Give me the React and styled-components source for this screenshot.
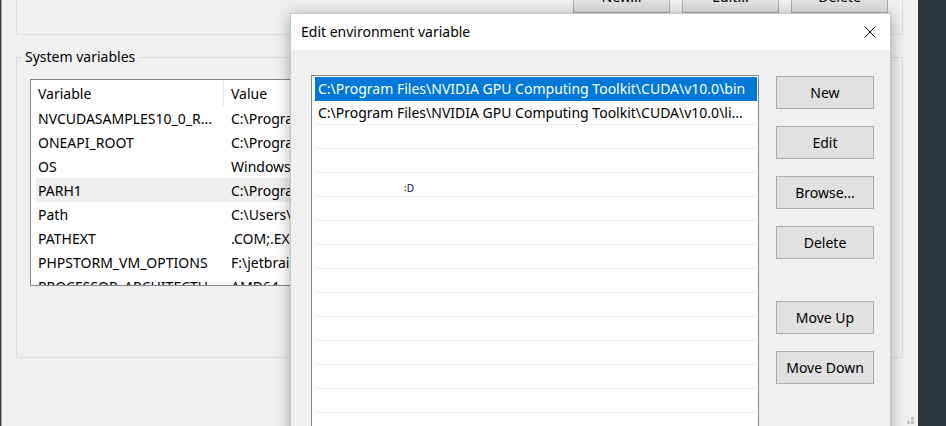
import React from "react";
import styled, { createGlobalStyle } from "styled-components";

const GlobalStyle = createGlobalStyle`
  html, body {
    margin: 0;
    padding: 0;
    background: #2d353c;
  }
  body {
    font-family: "Noto Sans", "Segoe UI", "Liberation Sans", sans-serif;
    font-size: 14px;
    color: #000;
  }
  * {
    box-sizing: border-box;
  }
`;

const Desktop = styled.div`
  position: relative;
  width: 946px;
  height: 426px;
  overflow: hidden;
  background: #2d353c;
`;

const EnvWindow = styled.div`
  position: relative;
  width: 917px;
  height: 100%;
  background: #f0f0f0;
  border-left: 1px solid #b4b4b4;
  margin-left: 1px;
  padding-left: 14px;
  display: flex;
  flex-direction: column;
  overflow: hidden;
`;

const TopGroup = styled.div`
  flex-shrink: 0;
  margin-top: -41px;
  width: 887px;
  height: 76px;
  border: 1px solid #dcdcdc;
  display: flex;
  justify-content: flex-end;
  align-items: flex-end;
  gap: 12px;
  padding: 0 14px 21px 0;
`;

const OldButton = styled.button`
  width: 97px;
  height: 33px;
  background: #e1e1e1;
  border: 1px solid #adadad;
  font: inherit;
  color: #000;
  padding: 0;
`;

const SystemGroup = styled.fieldset`
  flex-shrink: 0;
  margin: 12px 0 0 0;
  width: 887px;
  border: 1px solid #dcdcdc;
  padding: 0 0 71px 13px;
`;

const Legend = styled.legend`
  margin-left: -8px;
  padding: 0 3px;
  line-height: 20px;
`;

const ListView = styled.div`
  margin-top: 12px;
  width: 600px;
  height: 207px;
  background: #fff;
  border: 1px solid #828790;
  overflow: hidden;
`;

const HeaderRow = styled.div`
  display: flex;
  height: 26px;
  align-items: center;
`;

const HeaderCell = styled.div`
  width: ${(p) => p.$w}px;
  height: 100%;
  display: flex;
  align-items: center;
  padding-left: 7px;
  border-right: 1px solid #e5e5e5;
  white-space: nowrap;
`;

const VarRow = styled.div`
  display: flex;
  height: 24px;
  align-items: center;
  margin-left: 5px;
  padding-left: 2px;
  background: ${(p) => (p.$hot ? "#efefef" : "transparent")};
  white-space: nowrap;
`;

const VarName = styled.div`
  width: 186px;
  overflow: hidden;
`;

const VarValue = styled.div`
  padding-left: 7px;
  overflow: hidden;
`;

const Grip = styled.svg`
  position: absolute;
  right: 4px;
  bottom: 1px;
`;

const Dialog = styled.div`
  position: absolute;
  left: 290px;
  top: 13px;
  width: 601px;
  height: 440px;
  background: #f0f0f0;
  border: 1px solid #c8c8c8;
  box-shadow: 0 2px 14px rgba(0, 0, 0, 0.32);
  display: flex;
  flex-direction: column;
  overflow: hidden;
`;

const TitleBar = styled.div`
  flex-shrink: 0;
  height: 36px;
  background: #fff;
  display: flex;
  align-items: center;
  justify-content: space-between;
  padding: 0 14px 0 10px;
`;

const Title = styled.div`
  line-height: 20px;
`;

const CloseIcon = styled.svg`
  display: block;
`;

const DialogBody = styled.div`
  flex-shrink: 0;
  display: flex;
  gap: 17px;
  padding: 25px 0 0 20px;
`;

const PathList = styled.div`
  position: relative;
  width: 448px;
  height: 400px;
  background: #fff;
  border: 1px solid #828790;
  padding: 1px 1px 0 3px;
  overflow: hidden;
`;

const PathRow = styled.div`
  height: 24px;
  line-height: 23px;
  padding-left: 3px;
  white-space: nowrap;
  overflow: hidden;
  color: ${(p) => (p.$selected ? "#fff" : "#000")};
  background: ${(p) => (p.$selected ? "#0078d7" : "#fff")};
  border-bottom: 1px solid ${(p) => (p.$selected ? "#0078d7" : "#f0f0f0")};
`;

const Glitch = styled.span`
  position: absolute;
  left: 92px;
  top: 106px;
  font-size: 10px;
  line-height: 12px;
  color: #1a1a40;
  text-shadow: 0 0 3px rgba(0, 0, 0, 0.15);
`;

const ButtonColumn = styled.div`
  display: flex;
  flex-direction: column;
  gap: 17px;
  padding-top: 1px;
`;

const DlgButton = styled.button`
  width: 98px;
  height: 33px;
  margin-top: ${(p) => (p.$spaced ? "25px" : "0")};
  background: #e1e1e1;
  border: 1px solid #adadad;
  font: inherit;
  color: #000;
  padding: 0;
`;

const variables = [
  ["NVCUDASAMPLES10_0_R...", "C:\\ProgramData\\NVIDIA Corporation\\CUDA Samples\\v10.0"],
  ["ONEAPI_ROOT", "C:\\Program Files (x86)\\Intel\\oneAPI\\"],
  ["OS", "Windows_NT"],
  ["PARH1", "C:\\Program Files\\NVIDIA GPU Computing Toolkit"],
  ["Path", "C:\\Users\\user\\AppData\\Local"],
  ["PATHEXT", ".COM;.EXE;.BAT;.CMD;.VBS;.VBE"],
  ["PHPSTORM_VM_OPTIONS", "F:\\jetbrains\\PhpStorm\\bin"],
  ["PROCESSOR_ARCHITECTU...", "AMD64"],
];

const paths = [
  "C:\\Program Files\\NVIDIA GPU Computing Toolkit\\CUDA\\v10.0\\bin",
  "C:\\Program Files\\NVIDIA GPU Computing Toolkit\\CUDA\\v10.0\\li...",
];

const App = () => {
  const emptyRows = Array.from({ length: 14 });

  return (
    <>
      <GlobalStyle />
      <Desktop>
        <EnvWindow>
          <TopGroup>
            <OldButton>New...</OldButton>
            <OldButton>Edit...</OldButton>
            <OldButton>Delete</OldButton>
          </TopGroup>
          <SystemGroup>
            <Legend>System variables</Legend>
            <ListView>
              <HeaderRow>
                <HeaderCell $w={193}>Variable</HeaderCell>
                <HeaderCell $w={300}>Value</HeaderCell>
              </HeaderRow>
              {variables.map(([name, value]) => (
                <VarRow key={name} $hot={name === "PARH1"}>
                  <VarName>{name}</VarName>
                  <VarValue>{value}</VarValue>
                </VarRow>
              ))}
            </ListView>
          </SystemGroup>
          <Grip width="8" height="8" viewBox="0 0 8 8">
            <rect x="5" y="0" width="3" height="3" fill="#c2c2c2" />
            <rect x="1" y="4" width="3" height="3" fill="#c2c2c2" />
            <rect x="5" y="4" width="3" height="3" fill="#c2c2c2" />
          </Grip>
        </EnvWindow>

        <Dialog>
          <TitleBar>
            <Title>Edit environment variable</Title>
            <CloseIcon width="12" height="12" viewBox="0 0 12 12">
              <path d="M0.5 0.5 L11.5 11.5 M11.5 0.5 L0.5 11.5" stroke="#000" strokeWidth="1" fill="none" />
            </CloseIcon>
          </TitleBar>
          <DialogBody>
            <PathList>
              {paths.map((p, i) => (
                <PathRow key={p} $selected={i === 0}>
                  {p}
                </PathRow>
              ))}
              {emptyRows.map((_, i) => (
                <PathRow key={i}>&nbsp;</PathRow>
              ))}
              <Glitch>꞉D</Glitch>
            </PathList>
            <ButtonColumn>
              <DlgButton>New</DlgButton>
              <DlgButton>Edit</DlgButton>
              <DlgButton>Browse...</DlgButton>
              <DlgButton>Delete</DlgButton>
              <DlgButton $spaced>Move Up</DlgButton>
              <DlgButton>Move Down</DlgButton>
            </ButtonColumn>
          </DialogBody>
        </Dialog>
      </Desktop>
    </>
  );
};

export default App;
